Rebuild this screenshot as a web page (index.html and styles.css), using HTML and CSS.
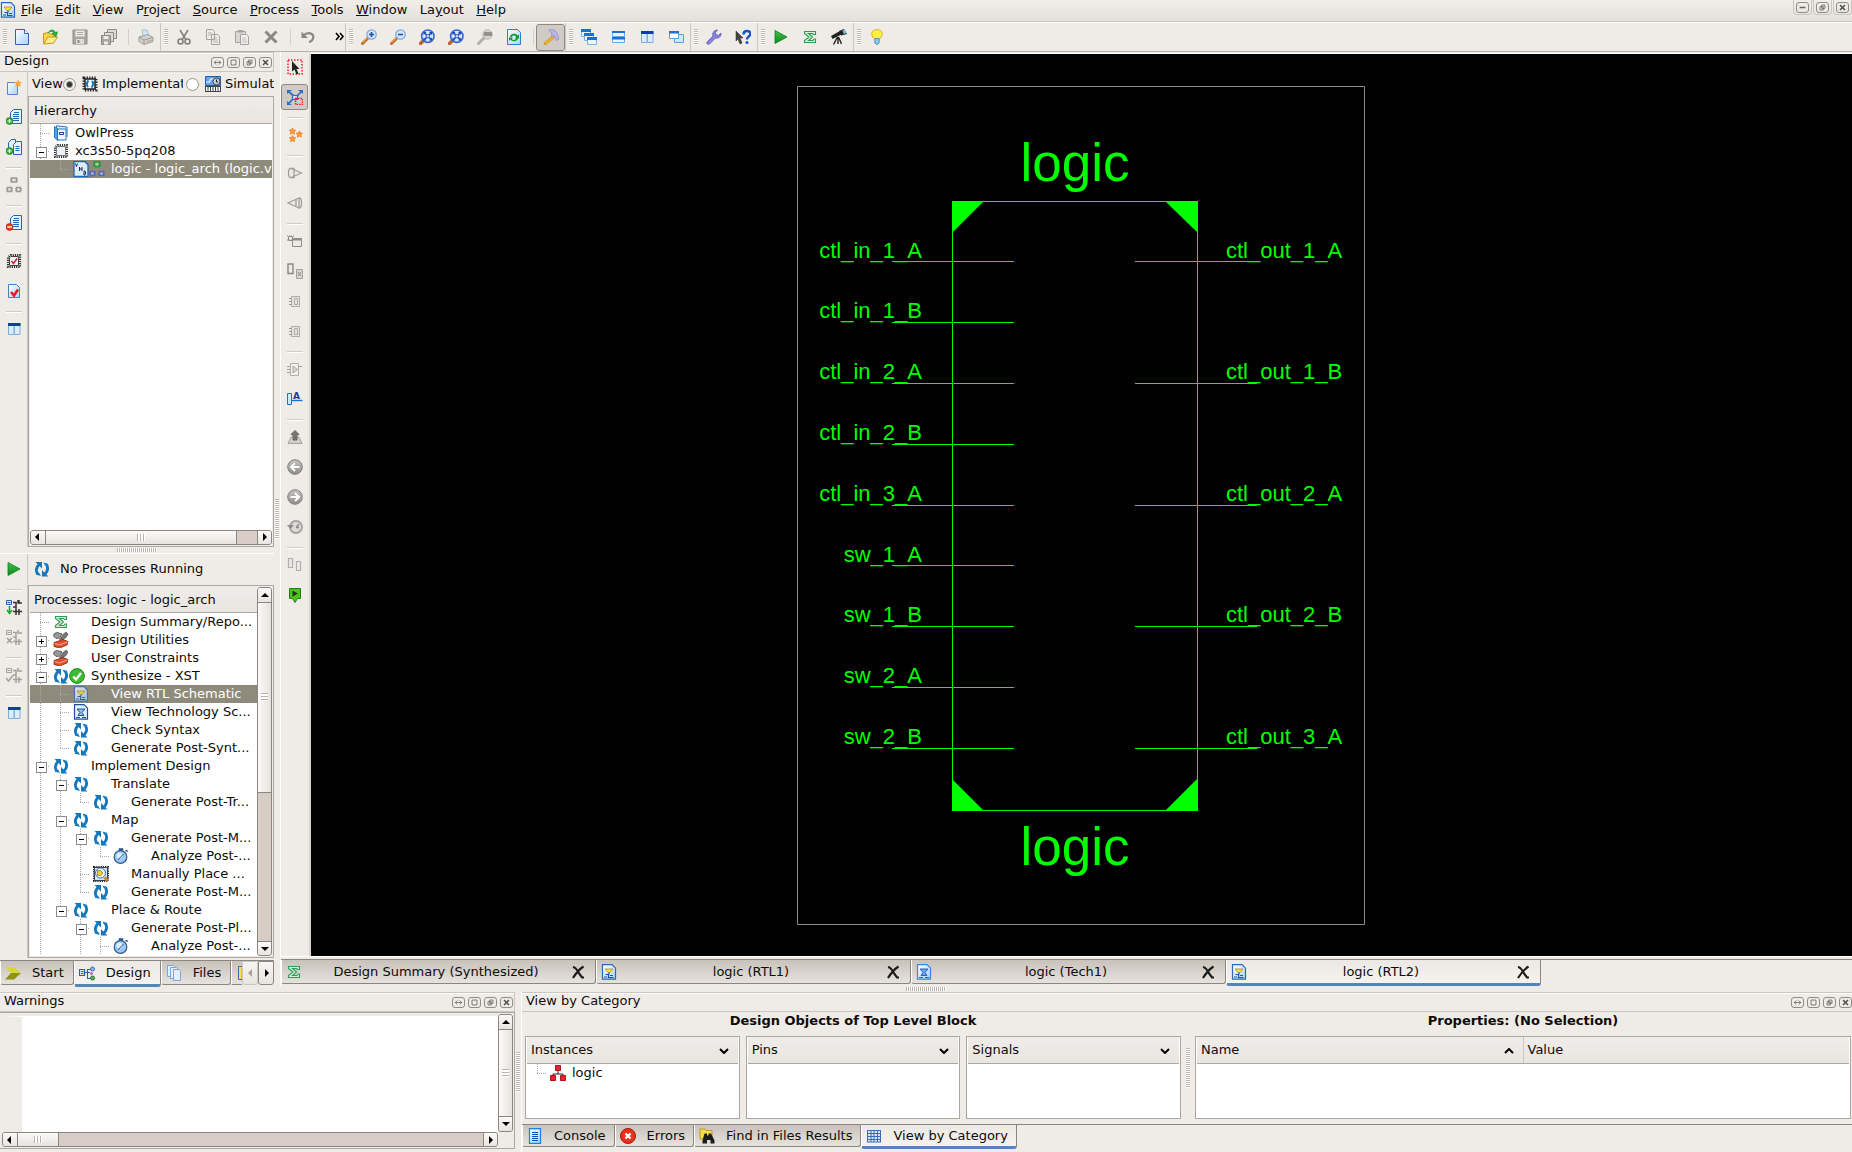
FILE: index.html
```html
<!DOCTYPE html>
<html lang="en">
<head>
<meta charset="utf-8">
<title>Project Navigator - logic (RTL2)</title>
<link rel="stylesheet" href="styles.css">
</head>
<body>
<svg class="sprite" width="0" height="0" aria-hidden="true">
  <defs>
    <linearGradient id="g-page" x1="0" y1="0" x2="1" y2="1"><stop offset="0" stop-color="#fff"/><stop offset="1" stop-color="#a8d2fa"/></linearGradient>
    <linearGradient id="g-green" x1="0" y1="0" x2="0" y2="1"><stop offset="0" stop-color="#3fc04a"/><stop offset="1" stop-color="#0c8a1c"/></linearGradient>
    <linearGradient id="g-grey" x1="0" y1="0" x2="0" y2="1"><stop offset="0" stop-color="#c4c2bf"/><stop offset="1" stop-color="#8f8d8a"/></linearGradient>
  </defs>
  <symbol id="new" viewBox="0 0 16 16"><path d="M1.500 .5h9l4 4v11h-13z" fill="url(#g-page)" stroke="#2f62b8"/><path d="M10.500 .5v4h4" fill="#fff" stroke="#2f62b8"/></symbol>
  <symbol id="open" viewBox="0 0 16 16"><path d="M.5 14.500V4.500l5-1 1.500 1.500h5v3" fill="#f6d548" stroke="#c39a1c"/><path d="M.8 15l4-7h9.700l-4 6z" fill="#fdf08a" stroke="#c39a1c"/><path d="M5 4C7 0 11 0 12.500 3.500l2-.7-1.500 5-4-3 1.700-.6C9.500 2 7.500 2 5 4z" fill="#22b532" stroke="#118a20" stroke-width=".6"/></symbol>
  <symbol id="save" viewBox="0 0 16 16"><path d="M1 1h14v14H1z" fill="#a9a6a2" stroke="#8c8986"/><path d="M3.500 1.500h9v6h-9z" fill="#eeecea"/><path d="M5 3.500h6M5 5.500h6" stroke="#a9a6a2"/><path d="M4 10h8v5H4z" fill="#dcdad7"/><path d="M5.500 11h2v3h-2z" fill="#8c8986"/></symbol>
  <symbol id="saveall" viewBox="0 0 16 16"><g fill="#dcdad7" stroke="#8c8986"><path d="M6.500 .5h9v9h-9z"/><path d="M3.500 3.500h9v9h-9z"/><path d="M.5 6.500h9v9h-9z" fill="#a9a6a2"/></g><path d="M2.500 7h5v3h-5zM3 12.500h4v3H3z" fill="#eeecea"/></symbol>
  <symbol id="print" viewBox="0 0 16 16"><path d="M4 1h5l2 6-6 1z" fill="#cfe4f7" stroke="#9db6cc" stroke-width=".8"/><path d="M1 8l9-2.500 5 3v4l-9 3-5-3z" fill="#d5d3d0" stroke="#8e8c89" stroke-width=".8"/><path d="M1 8l5 3 9-2.500M6 11v4" fill="none" stroke="#8e8c89" stroke-width=".8"/><path d="M8 12l5-1.500 1.500 1.500-5 2z" fill="#b9b7b4"/></symbol>
  <symbol id="cut" viewBox="0 0 16 16"><path d="M4 1l5.500 9M12 1L6.500 10" stroke="#7f7d7a" stroke-width="1.500" fill="none"/><circle cx="4.500" cy="12.500" r="2.500" fill="none" stroke="#7f7d7a" stroke-width="1.500"/><circle cx="11.500" cy="12.500" r="2.500" fill="none" stroke="#7f7d7a" stroke-width="1.500"/></symbol>
  <symbol id="copy" viewBox="0 0 16 16"><path d="M1.500 .5h6l2 2v8h-8zM6.500 5.500h6l2 2v8h-8z" fill="#eeecea" stroke="#a5a29e"/><path d="M3 4h4M3 6h3M8 9h4M8 11h5M8 13h5" stroke="#b5b2ae"/></symbol>
  <symbol id="paste" viewBox="0 0 16 16"><path d="M1.500 2.500h10v11h-10z" fill="#d9d7d4" stroke="#a5a29e"/><path d="M4 1h5v2.500H4z" fill="#a5a29e"/><path d="M6.500 5.500h6l2 2v8h-8z" fill="#f1efed" stroke="#a5a29e"/><path d="M8 9h4M8 11h5M8 13h5" stroke="#c5c2be"/></symbol>
  <symbol id="del" viewBox="0 0 16 16"><path d="M2.500 2.500l11 11M13.500 2.500l-11 11" stroke="#8a8885" stroke-width="3"/></symbol>
  <symbol id="undo" viewBox="0 0 16 16"><path d="M3 6.500C9 2 14.500 5 13 9.500 12.500 11.500 11 12.500 9 13" fill="none" stroke="#8a8885" stroke-width="2.200"/><path d="M1.500 2.500v6.500H8z" fill="#8a8885"/></symbol>
  <symbol id="zin" viewBox="0 0 16 16"><path d="M1.500 14.500l6-6" stroke="#c0702a" stroke-width="3" stroke-linecap="round"/><path d="M1.500 13.500l5-5" stroke="#f0b060"/><circle cx="10.500" cy="5.500" r="4.700" fill="#d2e7fc" stroke="#7fa6dc" stroke-width="1.300"/><path d="M8 5.500h5M10.500 3v5" stroke="#1d4fae" stroke-width="1.600"/></symbol>
  <symbol id="zout" viewBox="0 0 16 16"><path d="M1.500 14.500l6-6" stroke="#c0702a" stroke-width="3" stroke-linecap="round"/><path d="M1.500 13.500l5-5" stroke="#f0b060"/><circle cx="10.500" cy="5.500" r="4.700" fill="#d2e7fc" stroke="#7fa6dc" stroke-width="1.300"/><path d="M8 5.500h5" stroke="#1d4fae" stroke-width="1.600"/></symbol>
  <symbol id="fit" viewBox="0 0 16 16"><path d="M1.500 14.500l4-4" stroke="#b8682a" stroke-width="3.400" stroke-linecap="round"/><circle cx="8.800" cy="7.200" r="6.200" fill="#d6e8fb" stroke="#3a66cc" stroke-width="1.600"/><path d="M5 3.500l7.600 7.500M12.600 3.500L5 11" stroke="#1f49b4" stroke-width="1.700"/><path d="M4.500 3h3l-3 3zM13 3h-3l3 3zM4.500 11.500h3l-3-3zM13 11.500h-3l3-3z" fill="#1f49b4"/><path d="M7.300 5.700h3v3h-3z" fill="#cfe2fa" stroke="#1f49b4" stroke-width=".7"/></symbol>
  <symbol id="zsel" viewBox="0 0 16 16"><path d="M1.500 14.500l6-6" stroke="#b0aeab" stroke-width="3" stroke-linecap="round"/><circle cx="10.500" cy="5.500" r="4.700" fill="#d8d6d3" stroke="#b5b3b0"/><path d="M7 3h8v4H7z" fill="#93918e"/></symbol>
  <symbol id="refresh" viewBox="0 0 16 16"><path d="M1.500 .5h10l3 3v12h-13z" fill="url(#g-page)" stroke="#2a7fd0"/><path d="M4 8c.5-4 6-4 7.500-1.500L13 5.500v4H9l1.200-1.500C9 6 6.500 6 6 8zM12 9c-.5 4-6 4-7.500 1.500L3 12V8.500h4L5.800 10c1.200 1.500 3.700 1.500 4.200-1z" fill="#109a28"/></symbol>
  <symbol id="hammer" viewBox="0 0 16 16"><path d="M1 14l9-7.500 1.500 2L3 15.500q-2 .5-2-1.500z" fill="#f0b92c" stroke="#b98513" stroke-width=".7"/><path d="M5.500 1q5-1.500 8 2l2.500 7-2.500 1.500L11.500 7 8.500 7l.5-3z" fill="#b9b6ee" stroke="#8a89c4" stroke-width=".7"/></symbol>
  <symbol id="cascade" viewBox="0 0 16 16"><g fill="#e9f4ff" stroke="#78b0ea"><path d="M.5 1.500h9v6h-9z"/><path d="M3.500 5.500h9v6h-9z"/><path d="M6.500 9.500h9v6h-9z"/></g><path d="M0 0h10v3H0zM3 4h10v3H3zM6 8h10v3H6z" fill="#1872d6"/></symbol>
  <symbol id="tileh" viewBox="0 0 16 16"><path d="M2.500 2.500h12v5h-12zM2.500 8.500h12v5h-12z" fill="#e9f4ff" stroke="#6aa8e6"/><path d="M2 2h13v2H2zM2 8h13v2.500H2z" fill="#1872d6"/></symbol>
  <symbol id="tilev" viewBox="0 0 16 16"><path d="M2.500 2.500h5.500v11h-5.500zM8.500 2.500h5.500v11h-5.500z" fill="#ddecfb" stroke="#7faede"/><path d="M2 2h12.500v3H2z" fill="#0c3ea6"/></symbol>
  <symbol id="restore" viewBox="0 0 16 16"><path d="M6.500 5.500h9v8h-9z" fill="#cfe6fd" stroke="#55a2ea"/><path d="M1.500 3.500h9v6h-9z" fill="#fff" stroke="#55a2ea"/><path d="M1 2h10v2.500H1z" fill="#1872d6"/></symbol>
  <symbol id="wrench" viewBox="0 0 16 16"><path d="M1 13l6-6c-1-3 1-6 4.500-6L9.500 3.500l.5 2.500 2.500.3 2.500-2.200c.5 3.500-2.500 5.600-5.500 4.900l-6 6c-1.500 1-3.500-.5-2.500-2z" fill="#8a86dd" stroke="#5854ae" stroke-width=".8"/></symbol>
  <symbol id="play" viewBox="0 0 16 16"><path d="M2 1.500L14 8 2 14.500z" fill="url(#g-green)" stroke="#0b7f1b" stroke-width=".8"/></symbol>
  <symbol id="sigma" viewBox="0 0 16 16"><path d="M2.500 2.500h11v3h-2L10.500 4.500H6.500l4 3.500-4 3.500h4.500l1-1.500h1.500v3.500h-11v-2L7 8 2.500 4.500z" fill="#d4f0dc" stroke="#2b9c55" stroke-width="1.100"/></symbol>
  <symbol id="scope" viewBox="0 0 16 16"><path d="M0 7l9-5 1.500 3.500L1.500 10z" fill="#222"/><path d="M8 2l5-2 3 5-6 1.500z" fill="#222"/><path d="M11.500 1.500l2.500-.7 1.200 3.500-2.500.8z" fill="#6cc6e8"/><path d="M7 8v7M6.500 8l-4 7.500M7.500 8l3 7" stroke="#222" stroke-width="1.400"/></symbol>
  <symbol id="bulb" viewBox="0 0 16 16"><path d="M8 .6c7 0 6 6 3 9l-1 2v2.500l-2 1.400-2-1.400V11.600l-1-2C2 6.600 1 .6 8 .6z" fill="#fdee4a" stroke="#c9a71b" stroke-width=".8"/><path d="M6 9.500h4v4.500l-2 1.500-2-1.500z" fill="#8fd2f5" stroke="#2c86c0" stroke-width=".8"/></symbol>
  <symbol id="newsrc" viewBox="0 0 16 16"><path d="M1.500 3.500h10v12h-10z" fill="url(#g-page)" stroke="#5b87c8"/><path d="M12 0l1 2.700 3 .3-2 2 1 3-3-1.500L9 8l1-3-2-2 3-.3z" fill="#fca63a"/></symbol>
  <symbol id="addsrc" viewBox="0 0 16 16"><path d="M4.500 3.500l3-3h8v14h-11z" fill="#e4f0fd" stroke="#2a62b8"/><path d="M8 3.500h5M7 5.500h6M7 7.500h6M7 9.500h6M7 11.500h6" stroke="#2a62b8"/><circle cx="3.500" cy="12" r="3.400" fill="#35ad30" stroke="#147a18" stroke-width=".7"/><path d="M1.500 12h4M3.500 10v4" stroke="#fff" stroke-width="1.200"/></symbol>
  <symbol id="addcopy" viewBox="0 0 16 16"><path d="M2.500 3.500l3-3h4v12h-7z" fill="#e4f0fd" stroke="#2a62b8"/><path d="M7.500 5.500l3-3h5v13h-8z" fill="#e4f0fd" stroke="#2a62b8"/><path d="M9.500 7.500h4M9.500 9.500h4M9.500 11.500h4" stroke="#2a62b8"/><circle cx="3.500" cy="12" r="3.400" fill="#35ad30" stroke="#147a18" stroke-width=".7"/><path d="M1.500 12h4M3.500 10v4" stroke="#fff" stroke-width="1.200"/></symbol>
  <symbol id="hier" viewBox="0 0 16 16"><path d="M5.500 1h5v4h-5zM1.500 10.500h4v4h-4zM10.500 10.500h4v4h-4z" fill="#e4e1dd" stroke="#9b9895" stroke-width="1.400"/><path d="M4 2h1M4 4h1M11 2h1M11 4h1M0 11.500h1M0 13.500h1M6 11.500h1M6 13.500h1M9 11.500h1M9 13.500h1M15 11.500h1M15 13.500h1" stroke="#9b9895"/></symbol>
  <symbol id="rem" viewBox="0 0 16 16"><path d="M4.500 3.500l3-3h8v14h-11z" fill="#e4f0fd" stroke="#2a62b8"/><path d="M8 3.500h5M7 5.500h6M7 7.500h6M7 9.500h6M7 11.500h6" stroke="#2a62b8"/><circle cx="3.500" cy="12" r="3.400" fill="#ee3a16" stroke="#b82008" stroke-width=".7"/><path d="M1.200 12h4.600" stroke="#fff" stroke-width="1.400"/></symbol>
  <symbol id="chipcheck" viewBox="0 0 16 16"><path d="M4.500 2h9.500v12H2V4.500z" fill="none" stroke="#333" stroke-width="2.200" stroke-dasharray="1.200 1"/><path d="M5 3.500h7.500v9h-9V5z" fill="#eef2f6" stroke="#444"/><path d="M5.500 8l2 2.500 3.500-5" fill="none" stroke="#e02020" stroke-width="1.500"/></symbol>
  <symbol id="doccheck" viewBox="0 0 16 16"><path d="M2.500 1.500h8l3 3v10h-11z" fill="url(#g-page)" stroke="#4a7cc4"/><path d="M5 9l3 3.500 4-6" fill="none" stroke="#e81c24" stroke-width="2.600"/></symbol>
  <symbol id="impl" viewBox="0 0 16 16"><path d="M.5 1.500h5v4h-5z" fill="#dbeafb" stroke="#2a62b8"/><path d="M1.500 3.500h3" stroke="#2a62b8"/><path d="M3.500 7v6M1 11l2.500 3.500L6 11" fill="none" stroke="#1fa32f" stroke-width="1.500"/><path d="M7 3.500h3v9h6M10 8H7M12 1v3h4M7 12.500h3V16M13 10v6M13 4v-3" fill="none" stroke="#333" stroke-width="1.500"/></symbol>
  <symbol id="rerun" viewBox="0 0 16 16"><path d="M.5 1.500h5v4h-5zM1.500 3.500h3" fill="none" stroke="#a3a09d"/><path d="M1 9l5 5M6 9l-5 5M7 3.500h3v9h6M10 8H7M12 1v3h4M7 12.500h3V16M13 10v6" fill="none" stroke="#a3a09d" stroke-width="1.500"/></symbol>
  <symbol id="procok" viewBox="0 0 16 16"><path d="M.5 1.500h5v4h-5zM1.500 3.500h3" fill="none" stroke="#a3a09d"/><path d="M0 11l2.500 3L7 8.500M7 3.500h3v9h6M10 8H7M12 1v3h4M7 12.500h3V16M13 10v6" fill="none" stroke="#a3a09d" stroke-width="1.500"/></symbol>
  <symbol id="selrect" viewBox="0 0 16 16"><path d="M1 1h14v14H1z" fill="none" stroke="#ee1c24" stroke-width="1.500" stroke-dasharray="1.500 1.500"/><path d="M5 2l7.500 8H9.500l2 4.500-2 1-2-5L5 12.500z" fill="#222"/></symbol>
  <symbol id="zoomnet" viewBox="0 0 16 16"><path d="M2 3l5 4M14 3l-4 4M2 14l4-4" stroke="#2a6cc8" stroke-width="1.700"/><path d="M0 1h5L0 5zM16 1h-5l5 4zM0 16h5l-5-4z" fill="#2a6cc8"/><path d="M5.500 6.500h5v4h-5z" fill="#cfe2fa" stroke="#2a6cc8" stroke-width="1.200"/><path d="M8.500 9.500h7v6h-7z" fill="none" stroke="#ee1c24" stroke-width="1.500" stroke-dasharray="1.500 1"/></symbol>
  <symbol id="stars" viewBox="0 0 16 16"><path d="M5.500 1l.9 2 2.300.2-1.700 1.600.5 2.400-2-1.200-2 1.200.5-2.400-1.700-1.600 2.300-.2zM12.500 4l.8 2 2.200.2-1.600 1.600.4 2.300-1.900-1.200-2 1.200.5-2.300-1.700-1.600 2.300-.2zM5.500 8.500l.9 2 2.300.2L7 12.300l.5 2.400-2-1.200-2 1.200.5-2.400-1.700-1.600 2.300-.2z" fill="#fb9d3c" stroke="#f08020" stroke-width=".9"/></symbol>
  <symbol id="coner" viewBox="0 0 16 16"><path d="M4 3.500l10.500 4.500L4 12.500q-2.500.5-2.500-4.500T4 3.500zM4 3.500h3v9H4" fill="#ebe9e6" stroke="#a09d9a" stroke-width="1.300"/></symbol>
  <symbol id="conel" viewBox="0 0 16 16"><path d="M12 3L1 8l11 5q2.500.5 2.500-5T12 3zM9 4.500v7M12 3v10" fill="#ebe9e6" stroke="#a09d9a" stroke-width="1.300"/></symbol>
  <symbol id="nets" viewBox="0 0 16 16"><path d="M1.500 3.500h4v4h-4zM5.500 5.500h9v8h-9z" fill="#eceae7" stroke="#8f8c89"/><path d="M5 5h10v2.500H5z" fill="#8f8c89"/><path d="M0 3h7M0 7h5" stroke="#8f8c89" stroke-dasharray="1 1"/></symbol>
  <symbol id="swap" viewBox="0 0 16 16"><path d="M1 1h5v9.500H1z" fill="none" stroke="#8a8784" stroke-width="1.400"/><path d="M9.500 6.500h6v9h-6z" fill="#d6d4d1" stroke="#a3a09d"/><path d="M11 9l3 4M14 9l-3 4" stroke="#8f8c89"/></symbol>
  <symbol id="pins" viewBox="0 0 16 16"><path d="M4.500 3.500h8v10h-8zM7.500 5.500h3v6h-3z" fill="#e4e2df" stroke="#aeaba8"/><path d="M2 5.500h3M2 8.500h3M2 11.500h3" stroke="#9b9895"/></symbol>
  <symbol id="gate" viewBox="0 0 16 16"><path d="M3.500 2.500h8v12h-8z" fill="#f3f1ef" stroke="#b0adaa"/><path d="M6 5l4.500 3.500L6 12z" fill="#d8d6d3" stroke="#a8a5a2"/><path d="M0 5.500h3M0 8.500h3M0 11.500h3M12 5.500h3" stroke="#a3a09d"/></symbol>
  <symbol id="push" viewBox="0 0 16 16"><path d="M4 8h8l3 6.500H1z" fill="#d2d0cd" stroke="#a5a29f"/><path d="M8 1.500l4 4h-2V11H6V5.500H4z" fill="#777572" stroke="#6b6966"/></symbol>
  <symbol id="back" viewBox="0 0 16 16"><circle cx="8" cy="8" r="7.300" fill="url(#g-grey)" stroke="#84827f"/><path d="M12.500 8H4.500M8 4L4 8l4 4" fill="none" stroke="#fff" stroke-width="2"/></symbol>
  <symbol id="fwd" viewBox="0 0 16 16"><circle cx="8" cy="8" r="7.300" fill="url(#g-grey)" stroke="#84827f"/><path d="M3.500 8h8M8 4l4 4-4 4" fill="none" stroke="#fff" stroke-width="2"/></symbol>
  <symbol id="hist" viewBox="0 0 16 16"><circle cx="9" cy="8" r="6" fill="#dddbd8" stroke="#a5a29f" stroke-width="1.800"/><path d="M0 6h7l-3.500 4z" fill="#8c8a87"/><path d="M9 8.500l3-3.500M9 8.500h3" stroke="#8c8a87" stroke-width="1.300"/></symbol>
  <symbol id="pair" viewBox="0 0 16 16"><path d="M1.500 1.500h4v9h-4zM9.500 4.500h4v9h-4z" fill="#edebe8" stroke="#b0adaa" stroke-width="1.200"/></symbol>
  <symbol id="marker" viewBox="0 0 16 16"><path d="M2.500 1.500h11v10h-3L8 15.500l-2.500-4h-3z" fill="#4cc41f" stroke="#1f7d10"/><path d="M5.500 3.500L11 6.500l-5.500 3.200z" fill="#1d3b14"/></symbol>
  <symbol id="proj" viewBox="0 0 16 16"><path d="M3.500 3V.8l10.500 1.200v10" fill="#d9ebfc" stroke="#2776bf"/><path d="M1.500 1.500l3.500 2.500v11.500l-3.500-3z" fill="#5ba0dc" stroke="#2776bf"/><path d="M4.500 4h8.500v11H4.500z" fill="#eef6fe" stroke="#2776bf"/><path d="M6.500 7.500h4v2h-4z" fill="none" stroke="#28338a"/></symbol>
  <symbol id="chip" viewBox="0 0 16 16"><path d="M4.500 2h9.500v12H2V4.500z" fill="none" stroke="#333" stroke-width="2.200" stroke-dasharray="1.200 1"/><path d="M5 3.500h7.500v9h-9V5z" fill="#eef2f6" stroke="#777"/></symbol>
  <symbol id="implchip" viewBox="0 0 16 16"><path d="M2 2h12v12H2z" fill="none" stroke="#222" stroke-width="3" stroke-dasharray="1.300 1.300"/><path d="M3 3h10v10H3z" fill="#fff" stroke="#222" stroke-width="1.500"/><path d="M6.500 4.500Q3.500 8 6 11M9.500 11.500q3-3.500.500-6.500" fill="none" stroke="#1478c0" stroke-width="2"/></symbol>
  <symbol id="sim" viewBox="0 0 16 16"><path d="M.5.5h15v9H.5z" fill="#5ea4e6" stroke="#1f5fae"/><path d="M1 6h4V3h5v4" fill="none" stroke="#fff"/><circle cx="11.500" cy="5.500" r="3.500" fill="#c9ccd0" stroke="#444"/><path d="M11.500 3.500v2.500h1.500" stroke="#222" fill="none"/><path d="M0 10h16v6H0z" fill="#444"/><path d="M1 13h14" stroke="#fff" stroke-width="4" stroke-dasharray="1.500 1"/></symbol>
  <symbol id="vhd" viewBox="0 0 16 16"><path d="M1 .7h11l3 3v11.600H1z" fill="#dcecfb" stroke="#1d68b4" stroke-width="1.300"/><path d="M2.500 2.500l1 3 1-3M6.500 6v4M9 6v4M6.500 8H9M11 10v4h1q1.500-2 0-4z" fill="none" stroke="#1b2c54"/></symbol>
  <symbol id="hierc" viewBox="0 0 16 16"><path d="M5.500 1h5v4.500h-5z" fill="#8fd68f" stroke="#22962a" stroke-width="1.500"/><path d="M1.500 10.500h4v4h-4zM10.500 10.500h4v4h-4z" fill="#aab6de" stroke="#5568ac" stroke-width="1.400"/><path d="M4 2h1M4 4.500h1M11 2h1M11 4.500h1" stroke="#22962a"/><path d="M0 11.500h1M0 13.500h1M6 11.500h1M6 13.500h1M9 11.500h1M9 13.500h1M15 11.500h1M15 13.500h1" stroke="#5568ac"/></symbol>
  <symbol id="tools" viewBox="0 0 16 16"><path d="M.5 4q0-3.500 4-3.500L9 2 7.500 4.500l5.500 6-1.800 1.700L5.500 6 3 6.500z" fill="#9a9a9a" stroke="#444" stroke-width=".8"/><path d="M10 2.500L13 0l2 2-2 3.500-4 2.500-1-2z" fill="#777" stroke="#444" stroke-width=".6"/><path d="M1 10.500l9-3 5 2-1 3.500-7.500 3L1 14.500z" fill="#e0502f" stroke="#8c2412" stroke-width=".8"/><path d="M1.500 11.500l5 1.500 8-3" fill="none" stroke="#f8ab94"/></symbol>
  <symbol id="cycle" viewBox="0 0 16 16"><path d="M5.500 3Q.5 7.500 3.500 13M10.500 13.500Q15.500 9 12.500 3.500" fill="none" stroke="#1678bb" stroke-width="2.800"/><path d="M1.500 1h6.500v6.500zM14.500 15.500H8V9z" fill="#1678bb"/><path d="M1.500 13.500l5.500 1.500-2-3.500zM14.500 3L9.500 1.500l1.500 3z" fill="#1678bb"/></symbol>
  <symbol id="ok" viewBox="0 0 16 16"><circle cx="8" cy="8" r="7.400" fill="#3dbb35" stroke="#1c8a1c"/><path d="M4.300 8.500l2.700 3 5-6.500" fill="none" stroke="#fff" stroke-width="2.200"/></symbol>
  <symbol id="rtl" viewBox="0 0 16 16"><path d="M1.500 .7h9.500l3.500 3.500v11h-13z" fill="url(#g-page)" stroke="#2a68c0" stroke-width="1.200"/><path d="M4 5h8L8.800 8.500H7.200z" fill="#ffe43c" stroke="#b58c12" stroke-width=".8"/><path d="M8 8.500v2M4.500 10.500h3v3h5M9 11.500h3M3 13h3" fill="none" stroke="#1d50b0" stroke-width="1.200"/></symbol>
  <symbol id="tech" viewBox="0 0 16 16"><path d="M1.500 .7h9.500l3.500 3.500v11h-13z" fill="#e6f1fc" stroke="#1f4f9c" stroke-width="1.200"/><path d="M4 5h8L9 8.500l2 3H5l2-3z" fill="#8fc0f0" stroke="#1f4f9c"/><path d="M3 13.500h4M9 13.500h4" stroke="#1f4f9c"/></symbol>
  <symbol id="techtab" viewBox="0 0 16 16"><path d="M1.500 .7h9.500l3.500 3.500v11h-13z" fill="url(#g-page)" stroke="#3c84dc" stroke-width="1.200"/><path d="M4 5h8L9 8.500l2 3H5l2-3z" fill="#6aa6ec" stroke="#2a62c0"/><path d="M3 13.500h4M9 13.500h4" stroke="#2a62c0"/></symbol>
  <symbol id="watch" viewBox="0 0 16 16"><circle cx="7.500" cy="9" r="6.300" fill="#9ccaf2" stroke="#31598c" stroke-width="1.200"/><circle cx="6.500" cy="7.500" r="3" fill="#d9edfd"/><path d="M6 .5h4v2H6zM12 3l2-1 1 2" fill="#31598c" stroke="#31598c" stroke-width=".6"/><path d="M5 12l5.500-6" stroke="#31598c"/></symbol>
  <symbol id="floor" viewBox="0 0 16 16"><path d="M1 1h14v14H1z" fill="#cfe3f8" stroke="#222" stroke-width="2" stroke-dasharray="1.200 1"/><path d="M1.500 1.500h13v13h-13z" fill="none" stroke="#345"/><circle cx="7.500" cy="7" r="5" fill="#e8f3fe" stroke="#3f74b8"/><path d="M4.500 4.500h3q4 2.500 0 5h-3z" fill="#f6d22e" stroke="#987a10" stroke-width=".8"/><path d="M11.500 11.500l3 3" stroke="#d98626" stroke-width="3"/></symbol>
  <symbol id="start" viewBox="0 0 16 16"><path d="M0 2h9l7 6H6z" fill="#d4d838"/><path d="M6 8h10l-7 6.500H0z" fill="#8f9212"/></symbol>
  <symbol id="design" viewBox="0 0 16 16"><path d="M.5 4.500h5v6h-5z" fill="#dceafa" stroke="#2860b4" stroke-width="1.200"/><path d="M2 6.500h2.500M2 8.500h2.500M6 7.500h5M8.500 7.500v-3h4M8.500 7.500v6h4" fill="none" stroke="#2860b4" stroke-width="1.100"/><circle cx="13.500" cy="4" r="2" fill="#8fb6ee" stroke="#4466a8"/><circle cx="12.500" cy="8.500" r="1.500" fill="#c067c9"/><circle cx="13.500" cy="13" r="2" fill="#55b055" stroke="#2c7a2c"/></symbol>
  <symbol id="files" viewBox="0 0 16 16"><g fill="#e1effd" stroke="#7ca6d8"><path d="M1.500 .5h6l2 2v9h-8z"/><path d="M4.500 2.500h6l2 2v9h-8z"/><path d="M7.500 4.500h5l2 2v9h-7z"/></g></symbol>
  <symbol id="lib" viewBox="0 0 16 16"><path d="M.5 1.500h7v13h-7z" fill="#fbe04a" stroke="#3d6c9c"/><path d="M4.500 3.500h7v13h-7z" fill="#e6f2fe" stroke="#1d5fa8" stroke-width="1.400"/></symbol>
  <symbol id="close" viewBox="0 0 16 16"><path d="M3 3q3 .5 5 5l4 5.500h2M13.500 2.500Q8 6 3 14" fill="none" stroke="#1c1c1c" stroke-width="2.200"/></symbol>
  <symbol id="console" viewBox="0 0 16 16"><path d="M2.500 .7h11v14.600h-11z" fill="url(#g-page)" stroke="#1f7fe0" stroke-width="1.200"/><path d="M5 4.500h6M5 6.500h6M5 8.500h6M5 10.500h6M5 12.500h6" stroke="#0c52b8"/></symbol>
  <symbol id="err" viewBox="0 0 16 16"><circle cx="8" cy="8" r="7.500" fill="#e8321c" stroke="#a81408"/><path d="M5.500 5.500l5 5M10.500 5.500l-5 5" stroke="#fff" stroke-width="2.400"/></symbol>
  <symbol id="find" viewBox="0 0 16 16"><path d="M1 1h5l1 1.500h6V11H1z" fill="#f4dc4c" stroke="#b89c1e"/><path d="M5.500 5.500h2.500v2h1.500v-2H12l3.500 7v3h-4V12H9.500L8 12v3.500H3.500v-3z" fill="#1c1c1c"/></symbol>
  <symbol id="grid" viewBox="0 0 16 16"><path d="M1 2h14v12H1z" fill="#dbe8fa"/><path d="M1 2.500h14M1 5.500h14M1 8.500h14M1 11.500h14M1 14h14M1.500 2v12M5 2v12M8 2v12M11.500 2v12M14.500 2v12" stroke="#3c6ab6"/></symbol>
  <symbol id="redhier" viewBox="0 0 16 16"><path d="M8 5v4M3 11V9h10v2" fill="none" stroke="#222"/><path d="M5.500 .5h5v5h-5zM.5 10.500h5v5h-5zM10.500 10.500h5v5h-5z" fill="#e8252c" stroke="#b01118"/></symbol>
  <symbol id="d-float" viewBox="0 0 13 11"><path d="M2.500 5.500h8M5 3L2.500 5.500 5 8M8 3l2.500 2.500L8 8" fill="none" stroke="#66635f"/></symbol>
  <symbol id="d-max" viewBox="0 0 13 11"><path d="M3.500 2.500h6v6h-6z" fill="none" stroke="#66635f"/></symbol>
  <symbol id="d-res" viewBox="0 0 13 11"><path d="M5.500 2.500h4v4h-4zM3.500 4.500h4v4h-4z" fill="none" stroke="#66635f"/></symbol>
  <symbol id="d-x" viewBox="0 0 13 11"><path d="M3.500 2.500l6 6M9.500 2.500l-6 6" stroke="#55524e" stroke-width="2"/></symbol>
  <symbol id="d-min" viewBox="0 0 13 11"><path d="M3 5.500h7" stroke="#66635f" stroke-width="2"/></symbol>
</svg>

<header>
  <nav class="menubar" aria-label="Main menu">
    <svg class="ic"><use href="#rtl"/></svg>
    <div class="menus"><button><u>F</u>ile</button><button><u>E</u>dit</button><button><u>V</u>iew</button><button>P<u>r</u>oject</button><button><u>S</u>ource</button><button><u>P</u>rocess</button><button><u>T</u>ools</button><button><u>W</u>indow</button><button>La<u>y</u>out</button><button><u>H</u>elp</button></div>
    <span class="winctl">
      <button aria-label="Minimize"><svg><use href="#d-min"/></svg></button><button aria-label="Restore"><svg><use href="#d-res"/></svg></button><button aria-label="Close"><svg><use href="#d-x"/></svg></button>
    </span>
  </nav>
  <div class="toolbar" role="toolbar">
    <div class="group"><i class="handle"></i>
      <button aria-label="New"><svg><use href="#new"/></svg></button><button aria-label="Open"><svg><use href="#open"/></svg></button><button aria-label="Save"><svg><use href="#save"/></svg></button><button aria-label="Save all"><svg><use href="#saveall"/></svg></button><i class="sep"></i><button aria-label="Print"><svg><use href="#print"/></svg></button></div>
    <div class="group"><i class="handle"></i>
      <button aria-label="Cut"><svg><use href="#cut"/></svg></button><button aria-label="Copy"><svg><use href="#copy"/></svg></button><button aria-label="Paste"><svg><use href="#paste"/></svg></button><button aria-label="Delete"><svg><use href="#del"/></svg></button><i class="sep"></i><button aria-label="Undo"><svg><use href="#undo"/></svg></button><button class="more" aria-label="More"><svg><path d="M4 4l3 3.500L4 11M8 4l3 3.500L8 11" fill="none" stroke="#000" stroke-width="1.600"/></svg></button></div>
    <div class="group"><i class="handle"></i>
      <button aria-label="Zoom in"><svg><use href="#zin"/></svg></button><button aria-label="Zoom out"><svg><use href="#zout"/></svg></button><button aria-label="Zoom to full"><svg><use href="#fit"/></svg></button><button aria-label="Zoom to box"><svg><use href="#fit"/></svg></button><button aria-label="Zoom to selection"><svg><use href="#zsel"/></svg></button><button aria-label="Refresh"><svg><use href="#refresh"/></svg></button><i class="sep"></i><button class="on" aria-label="Options"><svg><use href="#hammer"/></svg></button></div>
    <div class="group"><i class="handle"></i>
      <button aria-label="Cascade"><svg><use href="#cascade"/></svg></button><button aria-label="Tile horizontally"><svg><use href="#tileh"/></svg></button><button aria-label="Tile vertically"><svg><use href="#tilev"/></svg></button><button aria-label="Float"><svg><use href="#restore"/></svg></button></div>
    <div class="group"><i class="handle"></i>
      <button aria-label="Preferences"><svg><use href="#wrench"/></svg></button><button aria-label="What is this"><svg viewBox="0 0 16 16"><path d="M1 2l7 7H5l2 5-2 1-2-5-2 2z" fill="#444" stroke="#222" stroke-width=".5"/><path d="M8.500 5.500Q8.500 2 12 2t3.300 3q0 1.500-1.800 2.700Q12 8.800 12 10.500" fill="none" stroke="#1556c0" stroke-width="2.400"/><circle cx="12" cy="13.500" r="1.500" fill="#1556c0"/></svg></button></div>
    <div class="group"><i class="handle"></i>
      <button aria-label="Implement"><svg><use href="#play"/></svg></button><button aria-label="Summary"><svg><use href="#sigma"/></svg></button><button aria-label="ChipScope"><svg><use href="#scope"/></svg></button></div>
    <div class="group"><i class="handle"></i>
      <button aria-label="Tips"><svg><use href="#bulb"/></svg></button></div>
  </div>
</header>

<main class="workspace">
  <section class="dock left">
    <div class="title"><h2>Design</h2><span class="ctl"><button aria-label="Float"><svg><use href="#d-float"/></svg></button><button aria-label="Maximize"><svg><use href="#d-max"/></svg></button><button aria-label="Restore"><svg><use href="#d-res"/></svg></button><button aria-label="Close"><svg><use href="#d-x"/></svg></button></span></div>
    <div class="upper">
      <div class="vbar">
        <button aria-label="New source"><svg><use href="#newsrc"/></svg></button><button aria-label="Add source"><svg><use href="#addsrc"/></svg></button><button aria-label="Add copy"><svg><use href="#addcopy"/></svg></button><i class="sep"></i><button aria-label="Hierarchy"><svg><use href="#hier"/></svg></button><i class="sep"></i><button aria-label="Remove"><svg><use href="#rem"/></svg></button><i class="sep"></i><button aria-label="Device check"><svg><use href="#chipcheck"/></svg></button><button aria-label="File check"><svg><use href="#doccheck"/></svg></button><i class="sep"></i><button aria-label="Columns"><svg><use href="#tilev"/></svg></button>
      </div>
      <div class="col">
        <form class="viewrow">
          <span class="lbl">View</span>
          <label class="opt first"><input type="radio" name="view" checked><svg class="ic"><use href="#implchip"/></svg><span>Implementation</span></label>
          <label class="opt"><input type="radio" name="view"><svg class="ic"><use href="#sim"/></svg><span>Simulation</span></label>
        </form>
        <div class="box">
          <div class="head">Hierarchy</div>
          <ul class="tree" role="tree">
            <li><i class="g t"></i><span class="icons one"><svg class="ic"><use href="#proj"/></svg></span>OwlPress</li>
            <li><i class="g x"></i><span class="icons one"><svg class="ic"><use href="#chip"/></svg></span>xc3s50-5pq208</li>
            <li class="sel"><i class="g"></i><i class="g e"></i><span class="icons"><svg class="ic"><use href="#vhd"/></svg><svg class="ic"><use href="#hierc"/></svg></span>logic - logic_arch (logic.vhd)</li>
          </ul>
          <div class="hscroll"><button class="arrow" aria-label="Scroll left"><svg><path d="M9 4v8L5 8z"/></svg></button><i class="thumb long"></i><i class="trough"></i><button class="arrow" aria-label="Scroll right"><svg><path d="M6 4v8l4-4z"/></svg></button></div>
        </div>
      </div>
    </div>
    <div class="split"><i class="grip"></i></div>
    <div class="lower">
      <div class="vbar">
        <button aria-label="Run"><svg><use href="#play"/></svg></button><i class="sep"></i><button aria-label="Run process"><svg><use href="#impl"/></svg></button><button aria-label="Stop process"><svg><use href="#rerun"/></svg></button><i class="sep"></i><button aria-label="Mark up to date"><svg><use href="#procok"/></svg></button><i class="sep"></i><button aria-label="Columns"><svg><use href="#tilev"/></svg></button>
      </div>
      <div class="col">
        <p class="status"><svg class="ic"><use href="#cycle"/></svg>No Processes Running</p>
        <div class="box procs">
          <div class="list">
            <div class="head">Processes: logic - logic_arch</div>
            <ul class="tree" role="tree">
              <li><i class="g t"></i><span class="icons"><svg class="ic"><use href="#sigma"/></svg></span>Design Summary/Repo...</li>
              <li><i class="g x plus"></i><span class="icons"><svg class="ic"><use href="#tools"/></svg></span>Design Utilities</li>
              <li><i class="g x plus"></i><span class="icons"><svg class="ic"><use href="#tools"/></svg></span>User Constraints</li>
              <li><i class="g x"></i><span class="icons"><svg class="ic"><use href="#cycle"/></svg><svg class="ic"><use href="#ok"/></svg></span>Synthesize - XST</li>
              <li class="sel"><i class="g v"></i><i class="g t"></i><span class="icons dim"><svg class="ic"><use href="#rtl"/></svg></span>View RTL Schematic</li>
              <li><i class="g v"></i><i class="g t"></i><span class="icons"><svg class="ic"><use href="#tech"/></svg></span>View Technology Sc...</li>
              <li><i class="g v"></i><i class="g t"></i><span class="icons"><svg class="ic"><use href="#cycle"/></svg></span>Check Syntax</li>
              <li><i class="g v"></i><i class="g e"></i><span class="icons"><svg class="ic"><use href="#cycle"/></svg></span>Generate Post-Synt...</li>
              <li><i class="g x"></i><span class="icons"><svg class="ic"><use href="#cycle"/></svg></span>Implement Design</li>
              <li><i class="g v"></i><i class="g x"></i><span class="icons"><svg class="ic"><use href="#cycle"/></svg></span>Translate</li>
              <li><i class="g v"></i><i class="g v"></i><i class="g e"></i><span class="icons"><svg class="ic"><use href="#cycle"/></svg></span>Generate Post-Tr...</li>
              <li><i class="g v"></i><i class="g x"></i><span class="icons"><svg class="ic"><use href="#cycle"/></svg></span>Map</li>
              <li><i class="g v"></i><i class="g v"></i><i class="g x"></i><span class="icons"><svg class="ic"><use href="#cycle"/></svg></span>Generate Post-M...</li>
              <li><i class="g v"></i><i class="g v"></i><i class="g v"></i><i class="g e"></i><span class="icons"><svg class="ic"><use href="#watch"/></svg></span>Analyze Post-...</li>
              <li><i class="g v"></i><i class="g v"></i><i class="g t"></i><span class="icons"><svg class="ic"><use href="#floor"/></svg></span>Manually Place ...</li>
              <li><i class="g v"></i><i class="g v"></i><i class="g e"></i><span class="icons"><svg class="ic"><use href="#cycle"/></svg></span>Generate Post-M...</li>
              <li><i class="g v"></i><i class="g x last"></i><span class="icons"><svg class="ic"><use href="#cycle"/></svg></span>Place &amp; Route</li>
              <li><i class="g v"></i><i class="g"></i><i class="g x"></i><span class="icons"><svg class="ic"><use href="#cycle"/></svg></span>Generate Post-Pl...</li>
              <li><i class="g v"></i><i class="g"></i><i class="g v"></i><i class="g t"></i><span class="icons"><svg class="ic"><use href="#watch"/></svg></span>Analyze Post-...</li>
            </ul>
          </div>
          <div class="vscroll"><button class="arrow" aria-label="Scroll up"><svg><path d="M4 10h8L8 6z"/></svg></button><i class="thumb half"></i><i class="trough"></i><button class="arrow" aria-label="Scroll down"><svg><path d="M4 6h8l-4 4z"/></svg></button></div>
        </div>
      </div>
    </div>
    <div class="tabs side">
      <button class="tab"><svg class="ic"><use href="#start"/></svg><span>Start</span></button><button class="tab active"><svg class="ic"><use href="#design"/></svg><span>Design</span></button><button class="tab"><svg class="ic"><use href="#files"/></svg><span>Files</span></button><button class="tab cut" aria-label="Libraries"><svg class="ic"><use href="#lib"/></svg></button><button class="page off" aria-label="Previous tabs"><svg><path d="M9 4v8L5 8z"/></svg></button><button class="page" aria-label="Next tabs"><svg><path d="M6 4v8l4-4z"/></svg></button>
    </div>
  </section>
  <div class="vsplit"><i class="grip"></i></div>
  <section class="editor">
    <div class="view">
      <div class="vbar mid">
        <button aria-label="Select"><svg><use href="#selrect"/></svg></button><button class="on" aria-label="Zoom view"><svg><use href="#zoomnet"/></svg></button><i class="sep"></i><button aria-label="Highlight"><svg><use href="#stars"/></svg></button><i class="sep"></i><button aria-label="Output cone"><svg><use href="#coner"/></svg></button><button aria-label="Input cone"><svg><use href="#conel"/></svg></button><i class="sep"></i><button aria-label="Nets"><svg><use href="#nets"/></svg></button><button aria-label="Swap"><svg><use href="#swap"/></svg></button><button aria-label="Add pins"><svg><use href="#pins"/></svg></button><button aria-label="Remove pins"><svg><use href="#pins"/></svg></button><i class="sep"></i><button aria-label="Gate"><svg><use href="#gate"/></svg></button><button aria-label="Net names"><svg viewBox="0 0 16 16"><path d="M.5 2.500h4v11h-4z" fill="#cdeafe" stroke="#1872d6"/><path d="M5 9.500h10.500" stroke="#1872d6" stroke-width="1.400"/><text class="glyph" x="6" y="8">A</text></svg></button><i class="sep"></i><button aria-label="Up"><svg><use href="#push"/></svg></button><button aria-label="Back"><svg><use href="#back"/></svg></button><button aria-label="Forward"><svg><use href="#fwd"/></svg></button><button aria-label="History"><svg><use href="#hist"/></svg></button><i class="sep"></i><button aria-label="Compare"><svg><use href="#pair"/></svg></button><button aria-label="Marker"><svg><use href="#marker"/></svg></button>
      </div>
      <div class="canvas">
        <svg class="schematic" viewBox="0 0 569 839" role="img" aria-label="Schematic of block logic">
          <path class="frame" d="M.5 .5h567v838H.5z"/>
          <g class="wires">
            <path d="M155.500 115.500h245v609h-245z"/>
            <path d="M95 175.500h122M95 236.500h122M95 297.500h122M95 358.500h122M95 419.500h122M95 479.500h122M95 540.500h122M95 601.500h122M95 662.500h122"/>
            <path d="M338 175.500h122M338 297.500h122M338 419.500h122M338 540.500h122M338 662.500h122"/>
          </g>
          <path class="fill" d="M155 115h32l-32 32zM401 115v32l-33-32zM155 725v-32l32 32zM401 725v-33l-33 33z"/>
          <g class="name"><text x="278" y="95">logic</text><text x="278" y="779">logic</text></g>
          <g class="pin in"><text x="125" y="172">ctl_in_1_A</text><text x="125" y="232">ctl_in_1_B</text><text x="125" y="293">ctl_in_2_A</text><text x="125" y="354">ctl_in_2_B</text><text x="125" y="415">ctl_in_3_A</text><text x="125" y="476">sw_1_A</text><text x="125" y="536">sw_1_B</text><text x="125" y="597">sw_2_A</text><text x="125" y="658">sw_2_B</text></g>
          <g class="pin"><text x="429" y="172">ctl_out_1_A</text><text x="429" y="293">ctl_out_1_B</text><text x="429" y="415">ctl_out_2_A</text><text x="429" y="536">ctl_out_2_B</text><text x="429" y="658">ctl_out_3_A</text></g>
        </svg>
      </div>
    </div>
    <div class="tabs docs">
      <button class="tab"><svg class="ic"><use href="#sigma"/></svg><span>Design Summary (Synthesized)</span><svg class="ic"><use href="#close"/></svg></button><button class="tab"><svg class="ic"><use href="#rtl"/></svg><span>logic (RTL1)</span><svg class="ic"><use href="#close"/></svg></button><button class="tab"><svg class="ic"><use href="#techtab"/></svg><span>logic (Tech1)</span><svg class="ic"><use href="#close"/></svg></button><button class="tab active"><svg class="ic"><use href="#rtl"/></svg><span>logic (RTL2)</span><svg class="ic"><use href="#close"/></svg></button>
    </div>
  </section>
</main>
<div class="split"><i class="grip"></i></div>
<footer class="bottom">
  <section class="dock warnings">
    <div class="title"><h2>Warnings</h2><span class="ctl"><button aria-label="Float"><svg><use href="#d-float"/></svg></button><button aria-label="Maximize"><svg><use href="#d-max"/></svg></button><button aria-label="Restore"><svg><use href="#d-res"/></svg></button><button aria-label="Close"><svg><use href="#d-x"/></svg></button></span></div>
    <div class="logbox">
      <div class="log"></div>
      <div class="vscroll"><button class="arrow" aria-label="Scroll up"><svg><path d="M4 10h8L8 6z"/></svg></button><i class="thumb full"></i><button class="arrow" aria-label="Scroll down"><svg><path d="M4 6h8l-4 4z"/></svg></button></div>
      <div class="hscroll"><button class="arrow" aria-label="Scroll left"><svg><path d="M9 4v8L5 8z"/></svg></button><i class="thumb short"></i><i class="trough"></i><button class="arrow" aria-label="Scroll right"><svg><path d="M6 4v8l4-4z"/></svg></button></div>
    </div>
  </section>
  <div class="vsplit"><i class="grip"></i></div>
  <section class="dock category">
    <div class="title"><h2>View by Category</h2><span class="ctl"><button aria-label="Float"><svg><use href="#d-float"/></svg></button><button aria-label="Maximize"><svg><use href="#d-max"/></svg></button><button aria-label="Restore"><svg><use href="#d-res"/></svg></button><button aria-label="Close"><svg><use href="#d-x"/></svg></button></span></div>
    <div class="panes">
      <div class="pane">
        <h3>Design Objects of Top Level Block</h3>
        <div class="lists">
          <div class="tbl"><table><thead><tr><th>Instances<svg class="chev"><path d="M1 1l4 4 4-4"/></svg></th></tr></thead><tbody><tr><td><i class="g e"></i><svg class="ic"><use href="#redhier"/></svg>logic</td></tr></tbody></table></div>
          <div class="tbl"><table><thead><tr><th>Pins<svg class="chev"><path d="M1 1l4 4 4-4"/></svg></th></tr></thead></table></div>
          <div class="tbl"><table><thead><tr><th>Signals<svg class="chev"><path d="M1 1l4 4 4-4"/></svg></th></tr></thead></table></div>
        </div>
      </div>
      <div class="vsplit wide"><i class="grip"></i></div>
      <div class="pane">
        <h3>Properties: (No Selection)</h3>
        <div class="lists">
          <div class="tbl"><table><thead><tr><th>Name<svg class="chev"><path d="M1 5l4-4 4 4"/></svg></th><th>Value</th></tr></thead></table></div>
        </div>
      </div>
    </div>
    <div class="tabs foot">
      <button class="tab"><svg class="ic"><use href="#console"/></svg><span>Console</span></button><button class="tab"><svg class="ic"><use href="#err"/></svg><span>Errors</span></button><button class="tab"><svg class="ic"><use href="#find"/></svg><span>Find in Files Results</span></button><button class="tab active"><svg class="ic"><use href="#grid"/></svg><span>View by Category</span></button>
    </div>
  </section>
</footer>
</body>
</html>
```
FILE: styles.css
```css
:root {
  --bg: #efebe7;
  --line: #aca7a2;
  --dark: #8b8680;
  --soft: #cbc6c1;
  --sel: #8f8b7c;
  --trough: #d7cdc6;
}

* { box-sizing: border-box; }

body {
  margin: 0;
  height: 100vh;
  min-height: 700px;
  display: flex;
  flex-direction: column;
  overflow: hidden;
  background: var(--bg);
  color: #0c0c0c;
  font: 13px/18px "DejaVu Sans", sans-serif;
}

button {
  padding: 0;
  border: 0;
  background: none;
  color: inherit;
  font: inherit;
  white-space: nowrap;
}

h2, h3, p, ul { margin: 0; padding: 0; font: inherit; }
svg { display: block; flex: none; width: 16px; height: 16px; }
i { display: block; flex: none; }
.sprite { position: absolute; width: 0; height: 0; }
.glyph { font: bold 9px "DejaVu Sans", sans-serif; fill: #1d3c98; }

/* menu bar */
.menubar {
  display: flex;
  align-items: center;
  height: 22px;
  padding-bottom: 1px;
  background: linear-gradient(#f1eeea, #e4e0db);
  border-bottom: 1px solid #c9c4be;
}
.menus {
  display: flex;
  justify-content: space-between;
  width: 497px;
  margin-left: -1px;
}
.menus button { padding: 0 6px; }
.winctl {
  display: flex;
  gap: 1px;
  margin-left: auto;
  height: 15px;
  align-self: flex-start;
}
.winctl button {
  width: 19px;
  height: 15px;
  padding: 0 2px;
  border: 1px solid var(--soft);
  border-top: 0;
  border-radius: 0 0 4px 4px;
}
.winctl svg, .ctl svg {
  width: 13px;
  height: 11px;
  border: 1px solid #8f8b87;
  border-radius: 3px;
}

/* tool bars */
.toolbar {
  display: flex;
  height: 30px;
  border-top: 1px solid #fff;
  background: #efece8;
  border-bottom: 1px solid #b4afa9;
}
.group { display: flex; align-items: center; }
.group + .group { border-left: 1px solid var(--soft); }
.group button {
  display: flex;
  align-items: center;
  justify-content: center;
  width: 29px;
  height: 27px;
}
.group .more { width: 23px; padding-left: 12px; }
.group .sep { width: 3px; height: 16px; margin-left: 5px; border-left: 1px solid #d4cfca; }
.handle {
  width: 4px;
  height: 16px;
  margin: 0 0 0 3px;
  background: repeating-linear-gradient(#bcb7b2 0 1px, #fff 1px 2px);
}
.group + .group .handle { margin-right: 1px; }
.group .on, .vbar .on {
  background: #d2cbc5;
  border: 1px solid #8d8883;
  border-radius: 3px;
}
.vbar { width: 27px; flex: none; overflow: hidden; padding-top: 2px; }
.vbar button {
  display: flex;
  align-items: center;
  justify-content: center;
  width: 27px;
  height: 26px;
  margin-bottom: 4px;
}
.vbar .sep {
  width: 16px;
  height: 8px;
  margin-left: 6px;
  background: linear-gradient(#d0cbc6 0 1px, #fff 1px) center / 16px 2px no-repeat;
}
.vbar.mid { width: 28px; }

/* docks */
.workspace { flex: 1; min-height: 0; display: flex; }
.dock { display: flex; flex-direction: column; min-width: 0; }
.dock.left { width: 274px; flex: none; }
.title {
  display: flex;
  align-items: center;
  justify-content: space-between;
  height: 20px;
  flex: none;
  padding: 0 1px 2px 4px;
  border: 1px solid var(--soft);
  border-left: 0;
  box-shadow: inset 0 1px #fff;
}
.title .ctl { display: flex; gap: 3px; padding-top: 3px; }
.upper { flex: 476 1 0; display: flex; min-height: 0; }
.lower { flex: 405 1 0; display: flex; min-height: 0; border-top: 1px solid #fff; }
.col {
  flex: 1;
  min-width: 0;
  display: flex;
  flex-direction: column;
  border-left: 1px solid var(--soft);
}

.viewrow { display: flex; align-items: center; height: 24px; padding-left: 4px; }
.lbl { width: 30px; }
.opt { display: flex; align-items: center; overflow: hidden; flex: 1; white-space: nowrap; }
.opt.first { flex: none; width: 121px; margin-right: 3px; }
.opt .ic { margin: 0 4px 0 6px; }
.opt input {
  appearance: none;
  flex: none;
  width: 13px;
  height: 13px;
  margin: 0;
  border: 1px solid #9a958f;
  border-radius: 50%;
  background: #fff;
}
.opt.first input { margin-left: 1px; }
.opt input:checked { background: radial-gradient(circle, #333 0 2px, #f4f2f0 4px); }

.box {
  flex: 1;
  min-height: 0;
  display: flex;
  flex-direction: column;
  border: 1px solid var(--line);
  padding: 1px;
  background: linear-gradient(#fff, #fff) content-box, var(--bg);
}
.procs { flex-direction: row; }
.list { flex: 1; min-width: 0; overflow: hidden; }
.head {
  height: 26px;
  padding: 4px 4px 3px;
  background: linear-gradient(#efece9, #e9e5e1);
  border-bottom: 1px solid var(--line);
  flex: none;
}
.tree { list-style: none; flex: 1; overflow: hidden; }
.tree li { display: flex; align-items: center; height: 18px; white-space: nowrap; overflow: hidden; }
.tree .sel { background: var(--sel); color: #fff; }
.icons { display: flex; width: 38px; margin-left: 3px; flex: none; }
.icons.one { width: 22px; }
.dim { opacity: .75; }

/* guide cells of a tree row */
.g {
  --v: repeating-linear-gradient(#a8a8a8 0 1px, transparent 1px 2px);
  --h: repeating-linear-gradient(90deg, #a8a8a8 0 1px, transparent 1px 2px);
  position: relative;
  width: 20px;
  height: 18px;
  background-repeat: no-repeat;
}
.g.v { background-image: var(--v); background-size: 1px 18px; background-position: 10px 0; }
.g.t, .g.x { background-image: var(--v), var(--h); background-size: 1px 18px, 10px 1px; background-position: 10px 0, 10px 9px; }
.g.e, .g.last { background-image: var(--v), var(--h); background-size: 1px 10px, 10px 1px; background-position: 10px 0, 10px 9px; }
.g.x::before {
  content: "";
  position: absolute;
  left: 6px;
  top: 5px;
  width: 9px;
  height: 9px;
  border: 1px solid #8f8b87;
  background: linear-gradient(#000, #000) center / 5px 1px no-repeat #fff;
}
.g.plus::before {
  background: linear-gradient(#000, #000) center / 5px 1px no-repeat, linear-gradient(#000, #000) center / 1px 5px no-repeat #fff;
}

/* scroll bars */
.hscroll, .vscroll { display: flex; flex: none; background: var(--trough); border: 1px solid var(--dark); border-radius: 3px; overflow: hidden; }
.hscroll { height: 15px; }
.vscroll { width: 15px; flex-direction: column; }
.arrow { display: flex; align-items: center; justify-content: center; flex: none; width: 14px; height: 13px; background: linear-gradient(#fbfaf9, #e8e4e0); }
.vscroll .arrow { width: 13px; height: 14px; }
.trough { flex: 1; }
.thumb { border: 0 solid var(--dark); }
.hscroll .thumb {
  border-width: 0 1px;
  background: repeating-linear-gradient(90deg, #b8b2ac 0 1px, #fff 1px 3px) center / 8px 7px no-repeat, linear-gradient(#fbfaf9, #e6e2dd);
}
.vscroll .thumb {
  border-width: 1px 0;
  background: repeating-linear-gradient(#b8b2ac 0 1px, #fff 1px 3px) center / 7px 8px no-repeat, linear-gradient(90deg, #fbfaf9, #e6e2dd);
}
.hscroll .trough + .arrow { border-left: 1px solid var(--dark); }
.vscroll .trough + .arrow { border-top: 1px solid var(--dark); }
.thumb.long { width: 80%; }
.hscroll .thumb.long { width: calc(100% - 48px); max-width: 80%; }
.thumb.short { width: 42px; }
.thumb.half { height: 52%; }
.thumb.full { flex: 1; }

.status { display: flex; align-items: center; gap: 10px; height: 31px; padding-left: 6px; }

/* splitters */
.split { height: 6px; flex: none; display: flex; align-items: center; justify-content: center; }
.split .grip { width: 40px; height: 4px; background: repeating-linear-gradient(90deg, #bcb7b2 0 1px, #fff 1px 2px); }
.vsplit { width: 6px; flex: none; display: flex; align-items: center; justify-content: center; }
.vsplit .grip { width: 4px; height: 40px; background: repeating-linear-gradient(#bcb7b2 0 1px, #fff 1px 2px); }
.vsplit.wide { width: 14px; }

/* tabs */
.tabs { display: flex; flex: none; border-top: 1px solid var(--dark); }
.tab {
  display: flex;
  align-items: center;
  height: 24px;
  padding: 0 8px 0 5px;
  border: 1px solid var(--dark);
  border-top: 0;
  border-left-color: #fff;
  border-radius: 0 0 3px 3px;
  background: linear-gradient(#c9c2bb, #e6e2dd);
}
.tab.active {
  height: 26px;
  border-bottom: 3px solid #5486b8;
  background: linear-gradient(#ece8e4, #f5f2ef);
}
.side { height: 26px; margin-top: 2px; }
.side .tab { padding: 0 9px 0 4px; }
.side .tab span { margin-left: 11px; }
.side .cut { flex: 1; padding: 0 0 0 6px; overflow: hidden; border-right: 0; border-radius: 0; }
.page { width: 16px; height: 24px; border: 1px solid var(--dark); border-radius: 0 0 3px 3px; background: linear-gradient(#f7f5f3, #e8e4e0); }
.page.off { border-color: var(--soft); fill: #a7a29d; }

.editor { flex: 1; min-width: 0; display: flex; flex-direction: column; border-left: 1px solid #fff; }
.view { flex: 1; min-height: 0; display: flex; border-bottom: 1px solid #fff; }
.canvas {
  flex: 1;
  min-width: 0;
  display: flex;
  align-items: center;
  justify-content: center;
  background: #000;
  border-left: 2px solid #d8d4d0;
  border-top: 1px solid #fff;
  margin-top: 1px;
}
.schematic { width: 569px; height: 839px; }
.frame { fill: none; stroke: #8a8a8a; }
.wires { fill: none; stroke: #0f0; }
.fill { fill: #0f0; }
.name, .pin { fill: #0f0; font-family: "Liberation Sans", sans-serif; }
.name { font-size: 53px; text-anchor: middle; }
.pin { font-size: 22px; }
.pin.in { text-anchor: end; }

.docs { height: 27px; margin-top: 2px; }
.docs .tab { flex: 0 1 315px; padding: 0 9px 0 4px; }
.docs .tab span { flex: 1; text-align: center; }

/* lower docks */
.bottom { display: flex; flex: none; height: 160px; }
.warnings { width: 515px; padding-bottom: 3px; }
.category { flex: 1; border-left: 1px solid #fff; }
.category .title { padding-right: 0; border-right: 0; }
.logbox {
  flex: 1;
  display: grid;
  grid-template: 1fr 15px / 1fr 15px;
  border: 1px solid var(--line);
  border-left: 0;
  padding: 1px 1px 1px 2px;
}
.log { margin: 2px 0 0 2px; background: #fff; border-top: 1px solid #fff; border-left: 18px solid var(--bg); }
.panes { flex: 1; min-height: 0; display: flex; padding: 0 1px 0 3px; }
.pane { flex: 1; min-width: 0; display: flex; flex-direction: column; }
.pane h3 { height: 24px; font-weight: bold; text-align: center; }
.lists { flex: 1; display: flex; gap: 6px; margin-bottom: 5px; }
.tbl { flex: 1; min-width: 0; border: 1px solid var(--line); background: #fff; padding: 0 1px; }
table { width: 100%; border-collapse: collapse; table-layout: fixed; }
th {
  position: relative;
  height: 26px;
  padding: 1px 4px 0;
  font-weight: normal;
  text-align: left;
  background: linear-gradient(#efece9, #e9e5e1);
  border-bottom: 1px solid var(--line);
}
th + th { border-left: 1px solid var(--soft); }
td { display: flex; align-items: center; gap: 6px; height: 18px; padding: 0; }
td .g { margin-right: -3px; }
.chev { position: absolute; right: 9px; top: 11px; width: 10px; height: 6px; fill: none; stroke: #000; stroke-width: 2px; }
.foot { height: 28px; }
.foot .tab { height: 22px; padding-left: 4px; }
.foot .tab.active { height: 24px; }
.foot .tab span { margin-left: 11px; }
```
